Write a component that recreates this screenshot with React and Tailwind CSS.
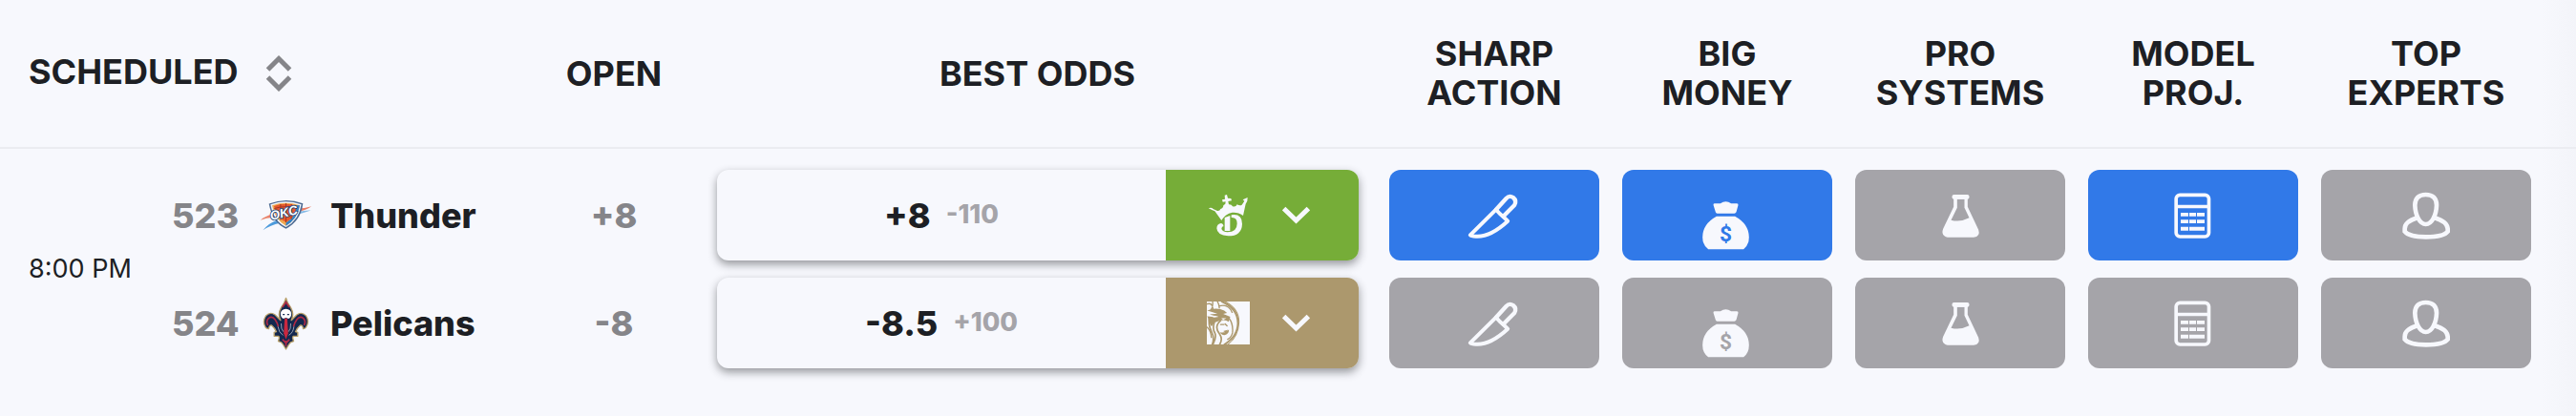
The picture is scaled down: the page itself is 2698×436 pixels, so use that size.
const ICON = "size-[72px] shrink-0";

function SortIcon() {
  return (
    <svg viewBox="0 0 28 40" className="h-10 w-7 shrink-0" fill="none" stroke="#858589" strokeWidth="5" aria-hidden="true">
      <path d="M2.500 16 14 4.500 25.500 16M2.500 24 14 35.500 25.500 24" />
    </svg>
  );
}

function Chevron() {
  return (
    <svg viewBox="426 170 88 56" className="h-[19px] w-[29px]" fill="none" stroke="#f7f8fd" strokeWidth="15" aria-hidden="true">
      <path d="M431 177 470 215 509 177" />
    </svg>
  );
}

function KnifeIcon() {
  return (
    <svg viewBox="266.5 58 216 216" className={ICON} fill="none" stroke="#f7f8fd" strokeWidth="12" strokeLinejoin="round" strokeLinecap="round" aria-hidden="true">
      <path d="M299 227 380 147 392 160 Q406 172 417 183 Q365 231 322 231 Q303 232 299 227Z" />
      <path d="M380 147 412 112 Q422 101 434 109 Q446 119 438 133 L403 168" strokeWidth="13" />
    </svg>
  );
}

function BagIcon({ tone }) {
  return (
    <svg viewBox="996.5 58 216 216" className={ICON} fill="#f7f8fd" aria-hidden="true">
      <path d="M1061 132Q1061 128 1065 128H1083Q1100 115 1117 128H1135Q1140 128 1139 133L1133 155Q1131 159 1127 159H1073Q1069 159 1068 155Z" />
      <path d="M1071 168H1129Q1173 192 1173 234Q1173 258 1156 272H1045Q1027 258 1027 234Q1027 192 1071 168Z" />
      <text x="1100" y="246" textAnchor="middle" fontSize="68" fontWeight="700" fontFamily="Roboto, sans-serif" fill={tone}>$</text>
    </svg>
  );
}

function FlaskIcon() {
  return (
    <svg viewBox="259.5 58 216 216" className={ICON} fill="#f7f8fd" aria-hidden="true">
      <rect x="342" y="100" width="54" height="14" rx="6" />
      <path fillRule="evenodd" d="M347 110V138L314 207Q308 222 318 230Q322 234 328 234H410Q432 231 425 210L391 138V110ZM358 114V141L339 180Q367 188 396 173L381 141V114Z" />
    </svg>
  );
}

function CalculatorIcon() {
  return (
    <svg viewBox="243 58 216 216" className={ICON} fill="#f7f8fd" aria-hidden="true">
      <rect x="297.500" y="101" width="103" height="131" rx="12" fill="none" stroke="#f7f8fd" strokeWidth="11" />
      <path d="M297 132H401V143H297ZM312 157H336V168H312ZM339 157H360V168H339ZM363 157H387V168H363ZM312 179H336V190H312ZM339 179H360V190H339ZM363 179H387V190H363ZM312 201H336V213H312ZM339 201H387V213H339Z" />
    </svg>
  );
}

function ExpertIcon() {
  return (
    <svg viewBox="974 58 216 216" className={ICON} fill="none" stroke="#f7f8fd" strokeWidth="14" aria-hidden="true">
      <path d="M1081 100C1104 100 1115 113 1115 133C1114 165 1100 193 1081 193C1062 193 1048 165 1047 133C1047 113 1058 100 1081 100Z" />
      <path d="M1054 173Q1015 185 1015 207V216Q1028 233 1082 233Q1137 233 1150 216V207Q1148 185 1109 173" />
    </svg>
  );
}

function ThunderLogo() {
  return (
    <svg viewBox="94 80 166 106" className="h-[35px] w-[55px]" role="img" aria-label="Thunder logo">
      <path d="M96 149Q112 135 134 131L138 140Q114 142 96 149Z" fill="#e9846b" />
      <path d="M104 181Q122 158 150 148L158 158Q128 164 104 181Z" fill="#4d9bdc" />
      <path d="M214 112Q236 112 258 105Q240 118 216 122Z" fill="#ea7d66" />
      <path d="M214 124Q236 117 256 118Q238 124 218 130Z" fill="#86bbe6" />
      <path d="M123 97Q176 76 231 96Q224 152 177 176Q134 158 123 97Z" fill="#4c6a92" />
      <path d="M128 99Q176 81 226 99Q218 149 177 171Q138 153 128 99Z" fill="#f3f5fb" />
      <path d="M133 102Q176 87 221 102Q213 146 177 167Q142 148 133 102Z" fill="#f0a94f" />
      <path d="M139 104Q176 91 214 104Q208 138 177 156Q148 142 139 104Z" fill="#e4572e" />
      <path d="M177 167Q213 146 221 102L212 101Q207 142 177 157Z" fill="#2f82c9" />
      <path d="M160 98V148M177 95V156M194 98V146M140 112Q176 100 212 112" stroke="#a6361f" strokeWidth="3" fill="none" />
      <text x="130" y="150" fontSize="40" fontWeight="900" fontStyle="italic" fontFamily="'Liberation Sans', sans-serif" fill="#ffffff" stroke="#23477a" strokeWidth="5" paintOrder="stroke" transform="rotate(-14 130 150)">OKC</text>
    </svg>
  );
}

function PelicansLogo() {
  return (
    <svg viewBox="104 390 146 168" className="h-14 w-[49px]" role="img" aria-label="Pelicans logo">
      <g fill="#14284f" stroke="#b9a06a" strokeWidth="4" strokeLinejoin="round">
        <path d="M177 394Q181 410 192 424Q204 444 194 464Q204 454 211 447Q226 436 240 450Q252 468 240 486Q238 490 231 491Q230 478 222 480Q212 488 207 500L214 502V514H200L198 519L201 530Q190 532 186 540L177 555L168 540Q164 532 153 530L156 519L154 514H140V502L147 500Q142 488 132 480Q124 478 123 491Q116 490 113 486Q102 468 114 450Q128 436 143 447Q150 454 160 464Q150 444 162 424Q173 410 177 394Z" />
      </g>
      <g fill="none" stroke="#b02a45" strokeWidth="5">
        <path d="M120 480Q113 466 123 457Q134 450 143 462Q149 470 153 484" />
        <path d="M234 480Q241 466 231 457Q220 450 211 462Q205 470 201 484" />
        <path d="M166 423Q173 414 177 407Q181 414 188 423" />
        <path d="M166 524 177 536 188 524M177 528V546" />
      </g>
      <path d="M177 428Q193 429 194 443Q194 455 185 459L177 456 169 459Q160 455 160 443Q161 429 177 428Z" fill="#ffffff" />
      <path d="M167 446H173M181 446H187" stroke="#14284f" strokeWidth="4" />
      <path d="M152 484Q154 503 168 511M202 484Q200 503 186 511M162 474Q161 492 169 500M192 474Q193 492 185 500" stroke="#d7dbe6" strokeWidth="2" fill="none" />
      <path d="M173 458H181L184 505 177 524 170 505Z" fill="#c9283f" />
    </svg>
  );
}

function CrownLogo() {
  return (
    <svg viewBox="189 129 135 135" className="size-[45px]" fill="#f7f8fd" role="img" aria-label="DraftKings">
      <path d="M194 175Q203 171 209 177L222 183Q230 184 232 177Q240 176 241 166L247 161 248 154 239 155 237 148 246 146 245 134 252 132 255 143 265 144 267 151 256 153 258 163Q266 162 270 169Q280 172 284 163Q294 168 299 164L307 152 302 148 317 141 316 152 311 161 303 198C280 183 254 184 235 213L214 184Z" />
      <path d="M245 204 262 198V246H245Z" />
      <path d="M266 196Q300 191 300 224Q299 262 256 262Q221 260 220 238Q221 223 234 222Q242 224 241 232Q236 232 235 239Q238 249 254 250Q284 250 284 223Q284 203 266 204Z" />
    </svg>
  );
}

function LionLogo() {
  return (
    <svg viewBox="189 138 134 134" className="size-[45px]" role="img" aria-label="BetMGM">
      <path d="M189 138H323V272H189Z" fill="#f7f8fd" />
      <g fill="none" stroke="#ac986d" strokeLinecap="round">
        <path d="M236 138Q286 160 286 206Q285 248 244 272" strokeWidth="6" />
        <path d="M246 138Q292 162 289 206Q287 250 252 274" strokeWidth="3" />
        <path d="M228 152Q256 144 268 172M207 138Q209 154 202 164M222 138Q228 148 228 158M189 146Q206 140 208 160" strokeWidth="4" />
        <path d="M196 190Q194 216 204 234Q214 252 205 274M212 204Q206 224 214 236Q220 250 208 272M232 198Q210 216 229 240Q240 256 228 274" strokeWidth="5" />
        <path d="M190 218Q202 230 203 250M258 190Q272 208 269 236Q266 250 254 256M246 208 252 214M232 210H242" strokeWidth="4" />
      </g>
      <g fill="#ac986d">
        <path d="M190 166Q220 154 243 166L252 174 240 177 262 186 257 201Q244 192 224 200Q208 204 204 216Q194 202 194 192L190 184 220 186 230 190 198 178 222 176Z" />
        <path d="M230 234Q244 238 258 226Q258 240 244 243Q233 242 230 234ZM240 230 256 226 246 234Z" />
      </g>
      <path d="M196 183Q214 180 226 186L212 188ZM234 190H250L240 195Z" fill="#f7f8fd" />
    </svg>
  );
}

const signals = [
  { key: "sharp", lines: ["SHARP", "ACTION"], Icon: KnifeIcon },
  { key: "money", lines: ["BIG", "MONEY"], Icon: BagIcon },
  { key: "systems", lines: ["PRO", "SYSTEMS"], Icon: FlaskIcon },
  { key: "model", lines: ["MODEL", "PROJ."], Icon: CalculatorIcon },
  { key: "experts", lines: ["TOP", "EXPERTS"], Icon: ExpertIcon },
];

const teams = [
  {
    rotation: "523", name: "Thunder", Logo: ThunderLogo, open: "+8", line: "+8", price: "-110",
    Book: CrownLogo, bookBg: "bg-[#76ad38]", pad: "pt-[22px] pb-[9px]", active: ["sharp", "money", "model"],
  },
  {
    rotation: "524", name: "Pelicans", Logo: PelicansLogo, open: "-8", line: "-8.5", price: "+100",
    Book: LionLogo, bookBg: "bg-[#ac986d]", pad: "pt-[9px] pb-[22px]", active: [],
  },
];

function OddsBox({ team }) {
  return (
    <div className="flex h-[95px] overflow-hidden rounded-xl bg-[#f7f8fd] shadow-[0_4px_10px_rgba(29,31,36,0.45)]">
      <button type="button" className="flex flex-1 items-center justify-center gap-4">
        <span className="text-4xl font-extrabold">{team.line}</span>
        <span className="text-[27px] font-extrabold text-[#a5a4a9]">{team.price}</span>
      </button>
      <button type="button" aria-label={"Compare books for " + team.name} className={"flex w-[202px] items-center gap-[34px] pl-[43px] " + team.bookBg}>
        <team.Book />
        <Chevron />
      </button>
    </div>
  );
}

export default function App() {
  return (
    <main className="min-h-screen overflow-x-auto bg-[#f7f8fd] bg-[linear-gradient(to_left,#f3f4f9,#f7f8fd_36px)] font-['Inter',sans-serif] text-[#1d1f24]">
      <table className="w-full min-w-[2400px] table-fixed">
        <colgroup>
          <col className="w-[180px]" />
          <col className="w-[376px]" />
          <col className="w-[174px]" />
          <col />
          {signals.map((s) => <col key={s.key} className="w-[244px]" />)}
          <col className="w-[35px]" />
        </colgroup>
        <thead>
          <tr className="border-b-2 border-[#ebecf1] text-4xl leading-[41px]">
            <th scope="col" colSpan={2} className="pl-[30px] text-left">
              <button type="button" className="flex items-start gap-7 leading-9 font-bold">
                SCHEDULED
                <SortIcon />
              </button>
            </th>
            <th scope="col" className="font-bold">OPEN</th>
            <th scope="col" className="font-bold">BEST ODDS</th>
            {signals.map((s) => (
              <th key={s.key} scope="col" className="py-9 font-bold">
                {s.lines[0]}<br />{s.lines[1]}
              </th>
            ))}
            <td />
          </tr>
        </thead>
        <tbody>
          {teams.map((team, i) => (
            <tr key={team.name}>
              {i === 0 && (
                <td rowSpan={2} className="pl-[30px] align-middle text-[27px] whitespace-nowrap">8:00 PM</td>
              )}
              <td className={team.pad}>
                <div className="flex items-center text-4xl font-extrabold">
                  <span className="w-[88px] text-[#858589]">{team.rotation}</span>
                  <span className="flex w-[62px] justify-center"><team.Logo /></span>
                  <span className="pl-4">{team.name}</span>
                </div>
              </td>
              <td className={"text-center text-4xl font-extrabold text-[#858589] " + team.pad}>{team.open}</td>
              <td className={"pr-5 pl-[21px] " + team.pad}><OddsBox team={team} /></td>
              {signals.map((s) => {
                const on = team.active.includes(s.key);
                return (
                  <td key={s.key} className={"px-3 " + team.pad}>
                    <button
                      type="button"
                      aria-label={s.lines.join(" ") + " " + team.name}
                      className={"flex h-[95px] w-full items-center justify-center rounded-xl " + (on ? "bg-[#3179e8]" : "bg-[#a5a4a9]")}
                    >
                      <s.Icon tone={on ? "#3179e8" : "#a5a4a9"} />
                    </button>
                  </td>
                );
              })}
              <td />
            </tr>
          ))}
        </tbody>
      </table>
    </main>
  );
}
